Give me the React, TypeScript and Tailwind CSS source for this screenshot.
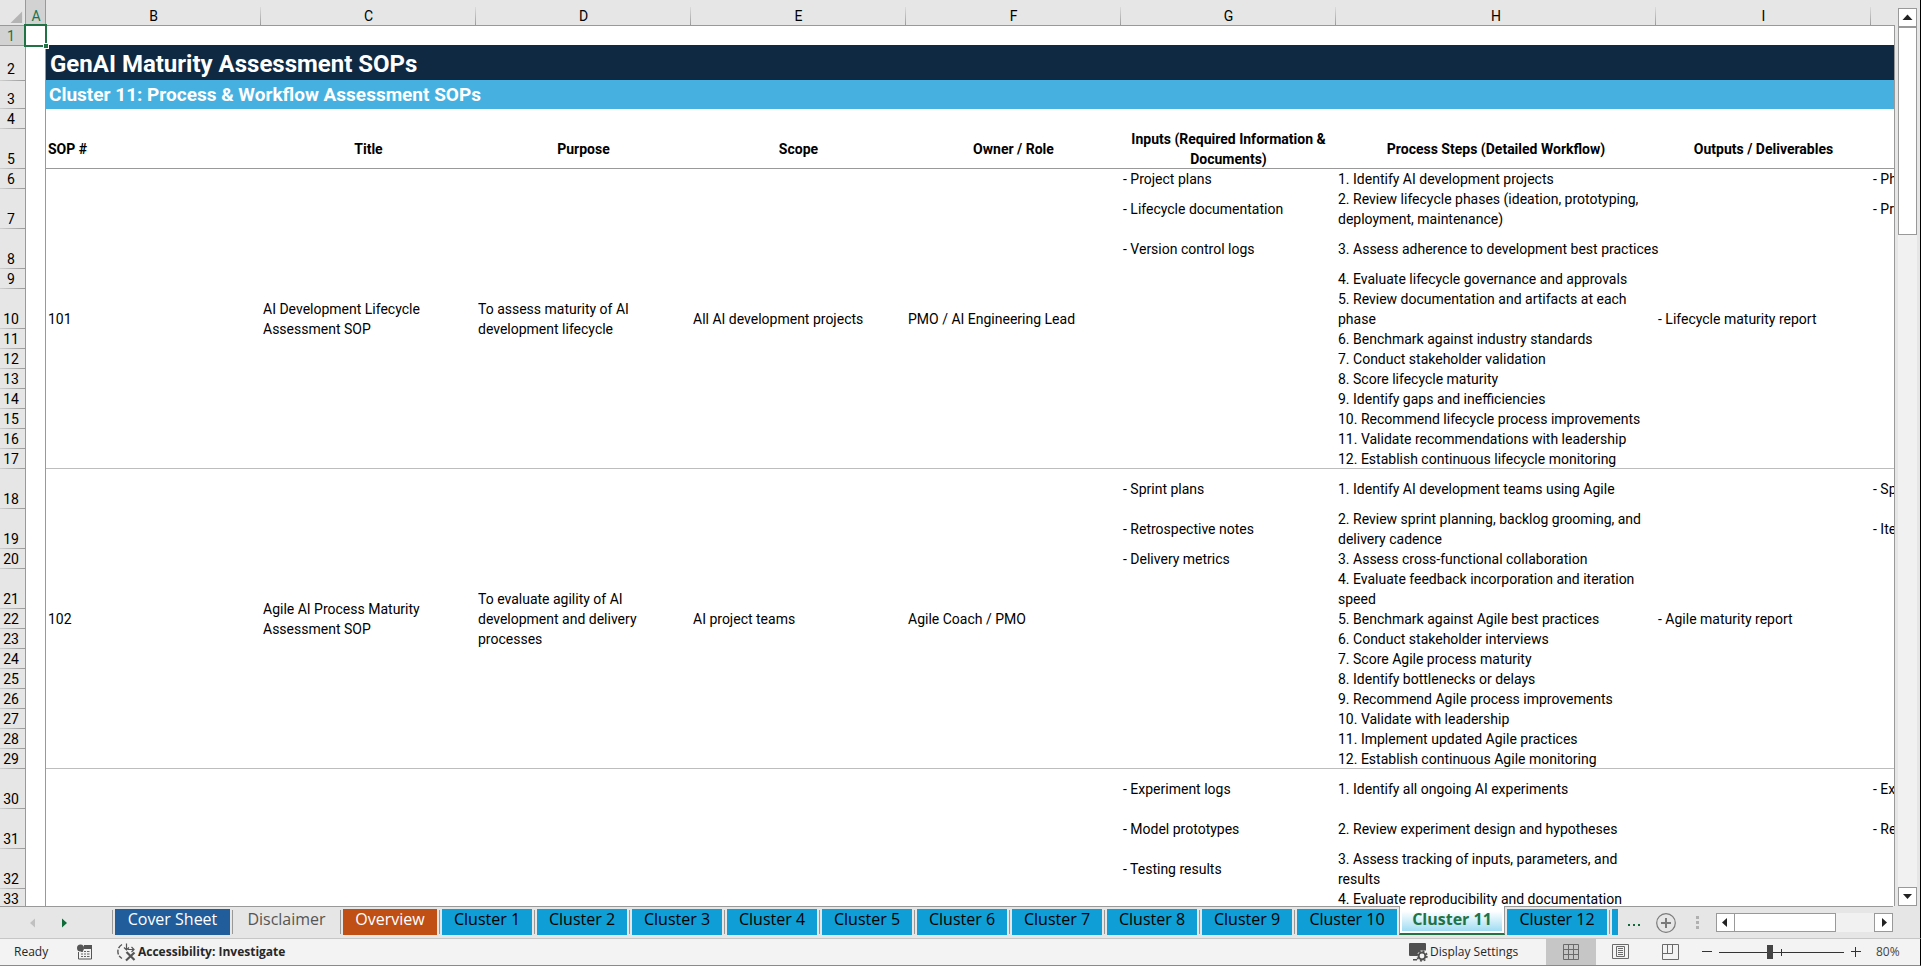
import { Fragment } from "react";
import type { ReactNode } from "react";

const COLUMNS = ["B", "C", "D", "E", "F", "G", "H", "I"];

const HEADINGS = [
  "SOP #",
  "Title",
  "Purpose",
  "Scope",
  "Owner / Role",
  "Inputs (Required Information &\nDocuments)",
  "Process Steps (Detailed Workflow)",
  "Outputs / Deliverables",
];

type Step = { tall?: boolean; step: string; input?: string; next?: string };
type Sop = {
  id: string;
  title: string;
  purpose: string;
  scope: string;
  owner: string;
  output: string;
  steps: Step[];
};

const SOPS: Sop[] = [
  {
    id: "101",
    title: "AI Development Lifecycle\nAssessment SOP",
    purpose: "To assess maturity of AI\ndevelopment lifecycle",
    scope: "All AI development projects",
    owner: "PMO / AI Engineering Lead",
    output: "- Lifecycle maturity report",
    steps: [
      { step: "1. Identify AI development projects", input: "- Project plans", next: "- Ph" },
      {
        tall: true,
        step: "2. Review lifecycle phases (ideation, prototyping,\ndeployment, maintenance)",
        input: "- Lifecycle documentation",
        next: "- Pr",
      },
      { tall: true, step: "3. Assess adherence to development best practices", input: "- Version control logs" },
      { step: "4. Evaluate lifecycle governance and approvals" },
      { tall: true, step: "5. Review documentation and artifacts at each\nphase" },
      { step: "6. Benchmark against industry standards" },
      { step: "7. Conduct stakeholder validation" },
      { step: "8. Score lifecycle maturity" },
      { step: "9. Identify gaps and inefficiencies" },
      { step: "10. Recommend lifecycle process improvements" },
      { step: "11. Validate recommendations with leadership" },
      { step: "12. Establish continuous lifecycle monitoring" },
    ],
  },
  {
    id: "102",
    title: "Agile AI Process Maturity\nAssessment SOP",
    purpose: "To evaluate agility of AI\ndevelopment and delivery\nprocesses",
    scope: "AI project teams",
    owner: "Agile Coach / PMO",
    output: "- Agile maturity report",
    steps: [
      { tall: true, step: "1. Identify AI development teams using Agile", input: "- Sprint plans", next: "- Sp" },
      {
        tall: true,
        step: "2. Review sprint planning, backlog grooming, and\ndelivery cadence",
        input: "- Retrospective notes",
        next: "- Ite",
      },
      { step: "3. Assess cross-functional collaboration", input: "- Delivery metrics" },
      { tall: true, step: "4. Evaluate feedback incorporation and iteration\nspeed" },
      { step: "5. Benchmark against Agile best practices" },
      { step: "6. Conduct stakeholder interviews" },
      { step: "7. Score Agile process maturity" },
      { step: "8. Identify bottlenecks or delays" },
      { step: "9. Recommend Agile process improvements" },
      { step: "10. Validate with leadership" },
      { step: "11. Implement updated Agile practices" },
      { step: "12. Establish continuous Agile monitoring" },
    ],
  },
  {
    id: "",
    title: "",
    purpose: "",
    scope: "",
    owner: "",
    output: "",
    steps: [
      { tall: true, step: "1. Identify all ongoing AI experiments", input: "- Experiment logs", next: "- Ex" },
      { tall: true, step: "2. Review experiment design and hypotheses", input: "- Model prototypes", next: "- Re" },
      {
        tall: true,
        step: "3. Assess tracking of inputs, parameters, and\nresults",
        input: "- Testing results",
      },
      { step: "4. Evaluate reproducibility and documentation" },
    ],
  },
];

const COLUMN_HEAD =
  "bg-[#e6e6e6] bg-[linear-gradient(to_bottom,#dcdcdc,#999999)] bg-[length:1px_19px] bg-right-bottom bg-no-repeat p-0 pt-1.5 text-center align-middle font-normal leading-5 shadow-[inset_0_-1px_0_#999999]";

const ROW_HEAD =
  "bg-[#e6e6e6] bg-[linear-gradient(to_right,#cfcfcf,#999999)] bg-[length:25px_1px] bg-left-bottom bg-no-repeat p-0 pr-1 text-center align-bottom font-normal leading-[19px] shadow-[inset_-1px_0_0_#999999]";

const CELL = "whitespace-pre p-0 pl-0.5 text-left align-middle";
const RULE = "shadow-[inset_0_-1px_0_#bdbdbd]";

function GutterCell() {
  return <td className="p-0 shadow-[inset_-1px_0_0_#999999]" />;
}

function Sheet() {
  let rowNumber = 5;
  return (
    <table className="w-[2086px] table-fixed border-separate border-spacing-0 font-[Roboto,sans-serif] text-sm leading-5 text-black">
      <colgroup>
        <col className="w-[26px]" />
        <col className="w-5" />
        {COLUMNS.map((c) => (
          <col key={c} className={c === "H" ? "w-[320px]" : "w-[215px]"} />
        ))}
        <col className="w-[215px]" />
      </colgroup>
      <thead>
        <tr className="h-[26px]">
          <th className="bg-[#e6e6e6] p-0 shadow-[inset_-1px_-1px_0_#999999]">
            <svg viewBox="0 0 26 26" className="block h-[25px] w-[25px]" aria-hidden="true">
              <path d="M23 11v12H11z" fill="#b4b4b4" />
            </svg>
          </th>
          <th className="bg-[#d2d2d2] p-0 pt-1.5 text-center font-normal leading-5 text-[#217346] shadow-[inset_-1px_-1px_0_#999999]">
            A
          </th>
          {COLUMNS.map((c) => (
            <th key={c} scope="col" className={COLUMN_HEAD}>
              {c}
            </th>
          ))}
          <th className={COLUMN_HEAD} />
        </tr>
      </thead>
      <tbody>
        <tr className="h-5">
          <th
            scope="row"
            className="bg-[#d2d2d2] p-0 pr-1 text-center align-bottom font-normal leading-[19px] text-[#217346] shadow-[inset_-1px_-1px_0_#999999]"
          >
            1
          </th>
          <td className="relative p-0 shadow-[inset_-1px_0_0_#999999]">
            <span className="absolute -top-0.5 -left-0.5 h-[23px] w-[23px] border-2 border-[#217346]" />
            <span className="absolute -right-0.5 -bottom-0.5 h-1 w-1 bg-[#217346] outline outline-white" />
          </td>
          <td colSpan={9} className="p-0 shadow-[inset_0_-1px_0_#0f2942]" />
        </tr>
        <tr className="h-[35px]">
          <th scope="row" className={ROW_HEAD + " pb-0.5"}>
            2
          </th>
          <GutterCell />
          <td
            colSpan={9}
            className="bg-[#0f2942] p-0 pl-1 align-middle text-2xl leading-8 font-bold text-white shadow-[inset_0_-1px_0_#46b1e1]"
          >
            GenAI Maturity Assessment SOPs
          </td>
        </tr>
        <tr className="h-7">
          <th scope="row" className={ROW_HEAD}>
            3
          </th>
          <GutterCell />
          <td colSpan={9} className="bg-[#46b1e1] p-0 pl-[3px] align-middle text-[19px] leading-6 font-bold text-white">
            Cluster 11: Process &amp; Workflow Assessment SOPs
          </td>
        </tr>
        <tr className="h-5">
          <th scope="row" className={ROW_HEAD}>
            4
          </th>
          <GutterCell />
          <td colSpan={9} className="p-0" />
        </tr>
        <tr className="h-10">
          <th scope="row" className={ROW_HEAD}>
            5
          </th>
          <GutterCell />
          {HEADINGS.map((text, i) => (
            <th
              key={text}
              scope="col"
              className={
                "p-0 align-middle font-bold whitespace-pre shadow-[inset_0_-1px_0_#999999] " +
                (i === 0 ? "pl-0.5 text-left" : "text-center")
              }
            >
              {text}
            </th>
          ))}
          <th className="p-0 shadow-[inset_0_-1px_0_#999999]" />
        </tr>
        {SOPS.map((sop, s) => {
          const span = sop.steps.length;
          const merged = CELL + " " + (s < 2 ? RULE : "");
          return (
            <Fragment key={s}>
              {sop.steps.map((item, i) => {
                rowNumber += 1;
                const last = s < 2 && i === span - 1;
                const cell = CELL + " " + (last ? RULE : "");
                return (
                  <tr key={item.step} className={item.tall ? "h-10" : "h-5"}>
                    <th scope="row" className={ROW_HEAD}>
                      {rowNumber}
                    </th>
                    <GutterCell />
                    {i === 0 &&
                      [sop.id, sop.title, sop.purpose, sop.scope, sop.owner].map((text, k) => (
                        <td key={k} rowSpan={span} className={merged}>
                          {text}
                        </td>
                      ))}
                    <td className={cell}>{item.input}</td>
                    <td className={cell}>{item.step}</td>
                    {i === 0 && (
                      <td rowSpan={span} className={merged}>
                        {sop.output}
                      </td>
                    )}
                    <td className={cell}>{item.next}</td>
                  </tr>
                );
              })}
            </Fragment>
          );
        })}
      </tbody>
    </table>
  );
}

function ScrollButton({ label, d }: { label: string; d: string }) {
  return (
    <button
      type="button"
      aria-label={label}
      className="flex h-[19px] w-[19px] shrink-0 items-center justify-center border border-[#999999] bg-white"
    >
      <svg viewBox="0 0 17 17" className="h-[17px] w-[17px]" aria-hidden="true">
        <path d={d} fill="#222222" />
      </svg>
    </button>
  );
}

function VerticalScrollbar() {
  return (
    <div className="flex w-[26px] shrink-0 flex-col items-start border-r border-black bg-[#e6e6e6] pt-2 pl-[3px]">
      <ScrollButton label="Scroll up" d="M8.500 5.500L13.500 11h-10z" />
      <div className="w-[19px] flex-1 bg-[#f1f1f1]">
        <div className="h-[208px] border border-[#999999] bg-white" />
      </div>
      <ScrollButton label="Scroll down" d="M8.500 11L13 6H4z" />
    </div>
  );
}

function Divider() {
  return <span className="mx-0.5 mt-[3px] h-6 w-px shrink-0 bg-[#999999]" />;
}

const TAB = "mt-0.5 h-[26px] shrink-0 pb-1.5 text-center leading-5 whitespace-nowrap ";

function Tab({ className, children }: { className: string; children?: ReactNode }) {
  return (
    <button type="button" role="tab" aria-selected={false} className={TAB + className}>
      {children}
    </button>
  );
}

function SheetTabs() {
  return (
    <div className="flex h-[33px] shrink-0 border-r border-b border-r-black border-b-[#c6c6c6] bg-[#e6e6e6] font-['Open_Sans',sans-serif] text-base">
      <div className="flex w-[110px] shrink-0 items-start border-t border-[#999999] pt-2 pl-6">
        <button type="button" aria-label="Previous sheets" className="flex h-4 w-4 items-center justify-center">
          <svg viewBox="0 0 16 16" className="h-4 w-4" aria-hidden="true">
            <path d="M11 3.500v9L6 8z" fill="#c0c0c0" />
          </svg>
        </button>
        <button type="button" aria-label="Next sheets" className="ml-4 flex h-4 w-4 items-center justify-center">
          <svg viewBox="0 0 16 16" className="h-4 w-4" aria-hidden="true">
            <path d="M6 3.500v9L11 8z" fill="#0f6b38" />
          </svg>
        </button>
      </div>
      <div role="tablist" className="flex min-w-0 flex-1 items-start overflow-hidden">
        <div className="flex shrink-0 items-start border-t border-[#999999]">
          <Divider />
          <Tab className="w-[115px] bg-[#215c9b] text-white">Cover Sheet</Tab>
          <Divider />
          <Tab className="w-[103px] text-[#555555]">Disclaimer</Tab>
          <Divider />
          <Tab className="w-[94px] bg-[#c04f15] text-white">Overview</Tab>
          {[1, 2, 3, 4, 5, 6, 7, 8, 9].map((n) => (
            <Fragment key={n}>
              <Divider />
              <Tab className="w-[90px] bg-[#0f9ed5] text-black">Cluster {n}</Tab>
            </Fragment>
          ))}
          <Divider />
          <Tab className="w-[100px] bg-[#0f9ed5] text-black">Cluster 10</Tab>
          <span className="h-7 w-0.5" />
        </div>
        <button
          type="button"
          role="tab"
          aria-selected={true}
          className="h-[29px] w-[106px] shrink-0 border-x border-b-2 border-x-[#999999] border-b-[#217346] bg-white px-0.5 pb-0.5"
        >
          <span className="block h-[25px] bg-linear-to-b from-white from-20% to-[#9fdcf3] pt-0.5 text-center leading-[22px] font-bold text-[#217346]">
            Cluster 11
          </span>
        </button>
        <div className="flex min-w-0 flex-1 items-start overflow-hidden border-t border-[#999999]">
          <span className="h-7 w-0.5 shrink-0" />
          <Tab className="w-[100px] bg-[#0f9ed5] text-black">Cluster 12</Tab>
          <Divider />
          <Tab className="w-[90px] bg-[#0f9ed5] text-left text-black" />
        </div>
      </div>
      <div className="flex w-[302px] shrink-0">
        <div className="flex flex-1 items-start border-t border-[#999999]">
          <button type="button" aria-label="More sheets" className="mt-2 ml-2.5 h-5 w-4">
            <svg viewBox="0 0 16 20" className="h-5 w-4" aria-hidden="true">
              <path d="M0 9h2v2H0zM5 9h2v2H5zM10 9h2v2h-2z" fill="#0f6b38" />
            </svg>
          </button>
          <button type="button" aria-label="New sheet" className="mt-1.5 ml-3 h-5 w-5">
            <svg viewBox="0 0 20 20" className="h-5 w-5" fill="none" stroke="#7a7a7a" aria-hidden="true">
              <circle cx="10" cy="10" r="9.300" strokeWidth="1.200" />
              <path d="M10 5v10M5 10h10" strokeWidth="2" />
            </svg>
          </button>
          <svg viewBox="0 0 4 14" className="mt-[9px] ml-5 h-3.5 w-1" aria-hidden="true">
            <path d="M0 0h3v3H0zM0 5h3v3H0zM0 10h3v3H0z" fill="#b0b0b0" />
          </svg>
          <div className="mt-1.5 ml-auto flex">
            <ScrollButton label="Scroll left" d="M5 8.500L10 4v9z" />
            <div className="-ml-px h-[19px] w-[140px] bg-[#f1f1f1]">
              <div className="h-[19px] w-[102px] border border-[#999999] bg-white" />
            </div>
            <ScrollButton label="Scroll right" d="M12 8.500L7 4v9z" />
          </div>
        </div>
        <span className="w-[27px] shrink-0" />
      </div>
    </div>
  );
}

function StatusBar() {
  return (
    <footer className="flex h-[27px] shrink-0 items-stretch border-r border-b border-r-black border-b-[#8a8a8a] bg-[#f3f3f3] font-['Open_Sans',sans-serif] text-xs text-[#262626]">
      <span className="flex w-[77px] items-center pl-3.5">Ready</span>
      <button type="button" aria-label="Record macro" className="flex items-center">
        <svg viewBox="0 0 16 16" className="h-4 w-4" aria-hidden="true">
          <path d="M7 1h8v4H7z" fill="#555555" />
          <circle cx="3.500" cy="4" r="3.500" fill="#555555" />
          <path d="M1.500 8v7h13V4" fill="none" stroke="#555555" />
          <path d="M4 7.500h2M7 7.500h2M10 7.500h2.500M4 10h2M7 10h2M10 10h2.500M4 12.500h2M7 12.500h2M10 12.500h2.500" stroke="#666666" />
        </svg>
      </button>
      <button type="button" className="ml-[23px] flex items-center gap-0.5 font-bold">
        <svg viewBox="0 0 20 20" className="h-5 w-5" fill="none" stroke="#555555" aria-hidden="true">
          <path d="M6 2.500A8 8 0 0 0 6 16.500" strokeWidth="1.400" strokeDasharray="5 1.500" />
          <path d="M10.500 1.500v6M8 5.500l2.500 2.500L13 5.500M12 7.500h6M15.500 5l2.500 2.500-2.500 2.500" strokeWidth="1.200" />
          <path d="M10.500 10l8 8M18.500 10.500l-8.500 8" strokeWidth="2.200" />
        </svg>
        Accessibility: Investigate
      </button>
      <span className="flex-1" />
      <button type="button" className="flex w-[138px] items-center gap-0.5">
        <svg viewBox="0 0 20 20" className="h-5 w-5" aria-hidden="true">
          <path d="M2 1h15a1 1 0 0 1 1 1v6.500H12.500l-3 3V14H2a1 1 0 0 1-1-1V2a1 1 0 0 1 1-1zM5 17h4v1.500H5z" fill="#505050" />
          <circle cx="14" cy="14" r="3.400" fill="none" stroke="#505050" strokeWidth="2" />
          <circle cx="14" cy="14" r="4.900" fill="none" stroke="#505050" strokeWidth="1.600" strokeDasharray="1.900 1.948" />
        </svg>
        Display Settings
      </button>
      <button type="button" aria-label="Normal view" className="flex w-[50px] items-center justify-center bg-[#c6c6c6]">
        <svg viewBox="0 0 16 16" className="h-4 w-4" fill="none" stroke="#6a6a6a" aria-hidden="true">
          <path d="M.5 .5h15v15H.5zM.5 5.500h15M.5 10.500h15M5.500 .5v15M10.500 .5v15" />
        </svg>
      </button>
      <button type="button" aria-label="Page layout view" className="flex w-[49px] items-center justify-center">
        <svg viewBox="0 0 17 16" className="h-4 w-[17px]" fill="none" stroke="#6a6a6a" aria-hidden="true">
          <path d="M.5 .5h16v14H.5zM4.500 2.500h8v10h-8zM6 4.500h5M6 6.500h5M6 8.500h5M6 10.500h5" />
        </svg>
      </button>
      <button type="button" aria-label="Page break preview" className="flex w-[50px] items-center justify-center">
        <svg viewBox="0 0 17 16" className="h-4 w-[17px]" fill="none" stroke="#6a6a6a" aria-hidden="true">
          <path d="M.5 .5h16v15H.5zM.5 9.500h10v-9M5.500 .5v9" />
        </svg>
      </button>
      <button type="button" aria-label="Zoom out" className="ml-1 flex w-4 items-center justify-center">
        <svg viewBox="0 0 10 10" className="h-2.5 w-2.5" aria-hidden="true">
          <path d="M0 4.500h10" stroke="#333333" />
        </svg>
      </button>
      <span className="relative ml-1 flex w-[125px] items-center">
        <span className="absolute top-[10px] left-[62px] h-[7px] w-px bg-[#333333]" />
        <input
          type="range"
          aria-label="Zoom"
          min={0}
          max={100}
          defaultValue={40}
          className="relative h-3.5 w-full appearance-none bg-transparent bg-[linear-gradient(#333333,#333333)] bg-[length:100%_1px] bg-center bg-no-repeat [&::-webkit-slider-thumb]:h-3.5 [&::-webkit-slider-thumb]:w-1.5 [&::-webkit-slider-thumb]:appearance-none [&::-webkit-slider-thumb]:bg-[#444444]"
        />
      </span>
      <button type="button" aria-label="Zoom in" className="ml-1 flex w-4 items-center justify-center">
        <svg viewBox="0 0 10 10" className="h-2.5 w-2.5" aria-hidden="true">
          <path d="M0 4.500h10M4.500 0v10" stroke="#333333" />
        </svg>
      </button>
      <button type="button" className="flex w-14 items-center pl-3 text-[#444444]">
        80%
      </button>
    </footer>
  );
}

export default function App() {
  return (
    <div className="flex h-screen flex-col overflow-hidden bg-[#e6e6e6]">
      <main className="flex min-h-0 flex-1">
        <div className="relative min-w-0 flex-1 overflow-hidden bg-white">
          <Sheet />
          <span className="absolute top-[25px] right-0 bottom-0 w-px bg-[#999999]" />
        </div>
        <VerticalScrollbar />
      </main>
      <SheetTabs />
      <StatusBar />
    </div>
  );
}
